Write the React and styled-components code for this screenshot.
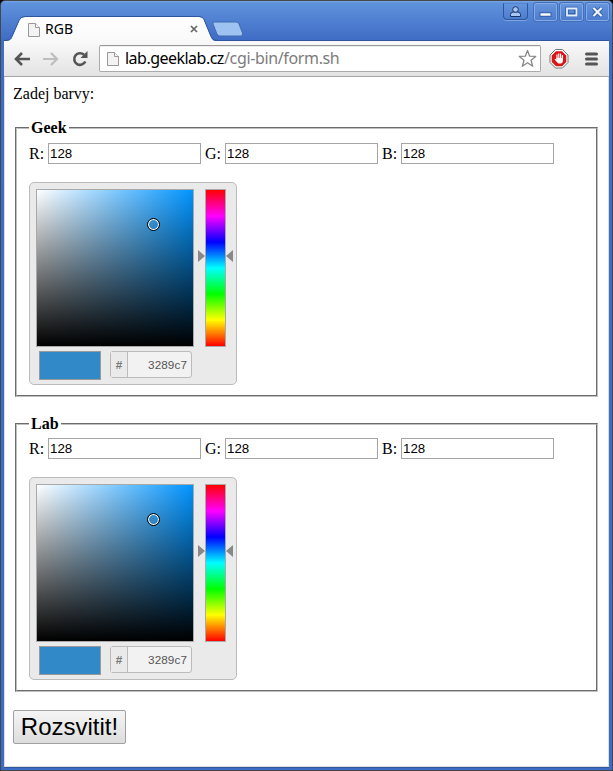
import React from 'react';
import styled, { createGlobalStyle } from 'styled-components';

const GlobalStyle = createGlobalStyle`
  * { box-sizing: border-box; }
  body { margin: 0; background: #000; overflow: hidden; }
`;

const Window = styled.div`
  display: flex;
  flex-direction: column;
  width: 613px;
  height: 771px;
  padding: 0 3px 3px 3px;
  border: 1px solid #45474b;
  border-radius: 5px 5px 0 0;
  background: linear-gradient(#7ba9e6 0, #5f92dc 2px, #3f6cc5 39px, #3e6bc4 100%);
`;

const TitleBar = styled.header`
  display: flex;
  justify-content: space-between;
  height: 40px;
  flex: none;
  border-bottom: 1px solid #2e559f;
`;

const TabStrip = styled.div`
  position: relative;
  width: 242px;
  height: 40px;
`;

const TabShape = styled.svg`
  position: absolute;
  left: 0;
  top: 0;
`;

const TabContent = styled.div`
  position: relative;
  display: flex;
  align-items: center;
  height: 24px;
  margin: 16px 0 0 24px;
  width: 170px;
`;

const TabTitle = styled.span`
  flex: 1;
  margin-left: 5px;
  font: 14px/24px "Noto Sans", sans-serif;
  color: #000;
`;

const WindowControls = styled.div`
  display: flex;
  align-items: flex-start;
  padding-top: 2px;
`;

const Control = styled.div`
  display: flex;
  align-items: center;
  justify-content: center;
  width: ${p => (p.$user ? 25 : 23)}px;
  height: ${p => (p.$user ? 17 : 18)}px;
  margin-right: ${p => (p.$user ? 6 : p.$last ? 0 : 3)}px;
  border: 1px solid ${p => (p.$user ? '#2d56a0' : '#88aae3')};
  border-top-color: ${p => (p.$user ? '#5285d0' : '#88aae3')};
  border-radius: ${p => (p.$user ? '0 0 4px 4px' : '2px')};
  outline: ${p => (p.$user ? 'none' : '1px solid #426fbd')};
  background: linear-gradient(#6595dc, #4c7ccd);
  box-shadow: ${p => (p.$user ? '0 1px 0 #81a6df' : 'none')};
`;

const Toolbar = styled.nav`
  display: flex;
  align-items: center;
  width: 605px;
  height: 36px;
  flex: none;
  padding: 0 8px 0 10px;
  border-bottom: 1px solid #a6a6a6;
  background: linear-gradient(#f9f9f9, #e3e3e3);
`;

const NavIcon = styled.svg`
  flex: none;
  margin-right: ${p => p.$gap}px;
`;

const AddressBar = styled.div`
  display: flex;
  align-items: center;
  width: 442px;
  height: 27px;
  flex: none;
  margin-right: 8px;
  padding: 0 3px 0 7px;
  border: 1px solid #aaa;
  border-top-color: #999;
  border-radius: 2px;
  background: #fff;
  box-shadow: inset 0 1px 0 #eee;
`;

const Address = styled.div`
  flex: 1;
  margin: -1px 0 0 6px;
  white-space: nowrap;
  font: 16px/24px "Noto Sans", sans-serif;
  color: #7c7c7c;
`;

const Host = styled.span`
  display: inline-block;
  width: 99px;
  letter-spacing: -0.52px;
  color: #000;
`;

const Path = styled.span`
  letter-spacing: -0.36px;
`;

const Page = styled.main`
  flex: 1;
  width: 605px;
  padding: 8px 8px 0;
  border: 1px solid #dcdcd8;
  border-top: 0;
  background: #fff;
  box-shadow: 0 1px 0 #2e559f;
  font: 16px/18px "Liberation Serif", serif;
  color: #000;
`;

const Intro = styled.p`
  margin: 0 0 16px;
`;

const ColorGroup = styled.fieldset`
  width: 583px;
  height: ${p => p.$height}px;
  margin: 0 0 ${p => p.$gap}px 2px;
  padding: ${p => p.$top}px 12px 0;
  border: 2px groove #c0c0c0;
`;

const GroupName = styled.legend`
  height: 18px;
  padding: 0 2px;
  font-weight: bold;
`;

const Channels = styled.div`
  display: flex;
  height: 21px;
  margin-bottom: 18px;
`;

const Channel = styled.label`
  display: flex;
  align-items: center;
  width: ${p => p.$width}px;
  justify-content: space-between;
  margin-right: 4px;
`;

const ChannelInput = styled.input`
  width: 153px;
  height: 21px;
  padding: 1px;
  border: 1px solid #a5a5a5;
  border-radius: 0;
  outline: none;
  background: #fff;
  font: 13.33px "Liberation Sans", sans-serif;
  color: #000;
`;

const Picker = styled.section`
  width: 208px;
  height: 203px;
  padding: 6px;
  border: 1px solid #bbb;
  border-radius: 5px;
  background: #eaeaea;
`;

const PickerTop = styled.div`
  display: flex;
  height: 158px;
`;

const Saturation = styled.div`
  position: relative;
  width: 158px;
  height: 158px;
  border: 1px solid #a9a9a9;
  background: linear-gradient(to bottom, transparent, #000), linear-gradient(to right, #fff, #0094ff);
`;

const Marker = styled.div`
  position: absolute;
  left: 110px;
  top: 28px;
  width: 13px;
  height: 13px;
  border: 1px solid #000;
  border-radius: 50%;
  box-shadow: inset 0 0 0 1px #fff;
`;

const Hue = styled.div`
  position: relative;
  width: 21px;
  height: 158px;
  margin-left: 11px;
  border: 1px solid #a9a9a9;
  background: linear-gradient(#f00, #f0f 16.67%, #00f 33.33%, #0ff 50%, #0f0 66.67%, #ff0 83.33%, #f00);
`;

const HueArrows = styled.svg`
  position: absolute;
  left: -8px;
  top: 60px;
`;

const PickerBottom = styled.div`
  display: flex;
  align-items: flex-start;
  padding: 4px 0 0 3px;
`;

const Swatch = styled.div`
  width: 62px;
  height: 29px;
  border: 1px solid #999;
  background: #3289c7;
`;

const HexField = styled.div`
  display: flex;
  width: 82px;
  height: 27px;
  margin-left: 9px;
  border: 1px solid #bbb;
  border-radius: 3px;
  background: #f2f2f2;
  font: 11.7px/25px "Liberation Sans", sans-serif;
  color: #555;
`;

const Hash = styled.span`
  width: 17px;
  border-right: 1px solid #bbb;
  background: #eaeaea;
  text-align: center;
  font-weight: bold;
  color: #777;
`;

const HexValue = styled.span`
  flex: 1;
  padding-right: 4px;
  text-align: right;
  letter-spacing: 0.1px;
`;

const Submit = styled.button`
  display: block;
  width: 113px;
  height: 34px;
  padding: 0;
  border: 1px solid #a0a0a0;
  border-radius: 2px;
  background: linear-gradient(#f5f5f5, #ddd);
  font: 24px/32px "Liberation Sans", sans-serif;
  color: #000;
`;

const PageIcon = ({ width = 12, height = 15 }) => (
  <svg width={width} height={height} viewBox="0 0 12 15">
    <path d="M.5 1.500h7l4 4v9H.5z" fill="#f3f3f3" stroke="#999" />
    <path d="M7.500 1.500v4h4" fill="#fff" stroke="#999" />
  </svg>
);

const channels = [
  { name: 'R', width: 172 },
  { name: 'G', width: 173 },
  { name: 'B', width: 172 },
];

function ColorPicker() {
  return (
    <Picker>
      <PickerTop>
        <Saturation><Marker /></Saturation>
        <Hue>
          <HueArrows width="35" height="12">
            <path d="M0 0l7 6-7 6zM35 0l-7 6 7 6z" fill="#888" />
          </HueArrows>
        </Hue>
      </PickerTop>
      <PickerBottom>
        <Swatch />
        <HexField><Hash>#</Hash><HexValue>3289c7</HexValue></HexField>
      </PickerBottom>
    </Picker>
  );
}

function Group({ name, height, gap, top }) {
  return (
    <ColorGroup $height={height} $gap={gap} $top={top}>
      <GroupName>{name}</GroupName>
      <Channels>
        {channels.map(c => (
          <Channel key={c.name} $width={c.width}>{c.name}:<ChannelInput defaultValue="128" /></Channel>
        ))}
      </Channels>
      <ColorPicker />
    </ColorGroup>
  );
}

export default function App() {
  return (
    <>
      <GlobalStyle />
      <Window>
        <TitleBar>
          <TabStrip>
            <TabShape width="242" height="40">
              <defs>
                <linearGradient id="tab" x2="0" y2="1"><stop stopColor="#fff" /><stop offset="1" stopColor="#f9f9f9" /></linearGradient>
              </defs>
              <path d="M0 40c5 0 7-1 8-4l7-16q1.500-4 6-4H195q4 0 5 3l7 17q1.500 4 5 4z" fill="url(#tab)" />
              <path d="M0 39.500c5 0 7-1 8-4l7-16q1.500-4 6-4H195q4 0 5 3l7 17q1.500 4 5 4H242" fill="none" stroke="#2e559f" />
              <path d="M210 21h22q2 0 3 2l3.500 9q1 3-2 3H216q-2 0-3-2l-4-10q-.5-2 1-2z" fill="#9fc3f0" stroke="#416dae" />
            </TabShape>
            <TabContent>
              <PageIcon />
              <TabTitle>RGB</TabTitle>
              <svg width="8" height="8"><path d="M1 1l6 6M7 1L1 7" stroke="#666" strokeWidth="1.700" /></svg>
            </TabContent>
          </TabStrip>
          <WindowControls>
            <Control $user>
              <svg width="11" height="11"><path d="M.5 10.500V8.500Q.5 6.500 3 6h5q2.500.5 2.500 2.500v2z" fill="#a9c6f2" stroke="#173469" /><circle cx="5.500" cy="3.500" r="2.800" fill="#a9c6f2" stroke="#173469" /></svg>
            </Control>
            <Control>
              <svg width="13" height="12"><path d="M.5 8.500h12" stroke="#315da8" strokeWidth="4.500" /><path d="M1.500 8.500h10" stroke="#fff" strokeWidth="2.500" /></svg>
            </Control>
            <Control>
              <svg width="13" height="12"><rect x="2" y="2.500" width="9" height="6.500" fill="none" stroke="#315da8" strokeWidth="3.500" /><path d="M2 2.500h9.500v7H2z" fill="none" stroke="#e6efff" strokeWidth="1.800" /></svg>
            </Control>
            <Control $last>
              <svg width="13" height="12"><path d="M2.500 2l8 8M10.500 2l-8 8" stroke="#315da8" strokeWidth="4" /><path d="M2.500 2l8 8M10.500 2l-8 8" stroke="#f0f5ff" strokeWidth="2.200" /></svg>
            </Control>
          </WindowControls>
        </TitleBar>
        <Toolbar>
          <NavIcon $gap={13} width="16" height="14"><path d="M16 7H3M8 1L2 7l6 6" fill="none" stroke="#555" strokeWidth="2.600" /></NavIcon>
          <NavIcon $gap={13} width="16" height="14"><path d="M0 7h13M8 1l6 6-6 6" fill="none" stroke="#bdbdbd" strokeWidth="2.200" /></NavIcon>
          <NavIcon $gap={11} width="16" height="16"><path d="M13.300 10.500A5.800 5.800 0 1 1 12 3.800" fill="none" stroke="#555" strokeWidth="2.600" /><path d="M15.500 0v7h-7z" fill="#555" /></NavIcon>
          <AddressBar>
            <PageIcon />
            <Address><Host>lab.geeklab.cz</Host><Path>/cgi-bin/form.sh</Path></Address>
            <svg width="19" height="19"><path d="M9.500 1.500l2.200 5.700 6 .2-4.700 3.800 1.700 6-5.200-3.500-5.200 3.500 1.700-6-4.700-3.800 6-.2z" fill="#fff" stroke="#888" strokeWidth="1.300" strokeLinejoin="round" /></svg>
          </AddressBar>
          <NavIcon $gap={16} width="20" height="20">
            <path d="M6.500 .5h7l5.500 5.500v7.500L13.500 19h-7L1 13.500V6z" fill="#fff" stroke="#777" />
            <path d="M7 2.200h6l4.300 4.300v6.500l-4.300 4.300h-6l-4.300-4.300V6.500z" fill="#d91515" />
            <path d="M8 10V5.800M9.800 9V4.800M11.600 9V5M13.400 10V6.500" stroke="#fff" strokeWidth="1.200" strokeLinecap="round" />
            <path d="M7.500 9h6.500v3q-.5 2.500-2.500 2.500H10q-1.200 0-2-1.500L5.500 10.500l.8-.7 1.200 1z" fill="#fff" />
          </NavIcon>
          <NavIcon $gap={0} width="13" height="14"><path d="M1.500 2h10M1.500 7h10M1.500 12h10" stroke="#555" strokeWidth="3" strokeLinecap="round" /></NavIcon>
        </Toolbar>
        <Page>
          <Intro>Zadej barvy:</Intro>
          <Group name="Geek" height={278} gap={18} top={6} />
          <Group name="Lab" height={277} gap={18} top={5} />
          <Submit>Rozsvitit!</Submit>
        </Page>
      </Window>
    </>
  );
}
